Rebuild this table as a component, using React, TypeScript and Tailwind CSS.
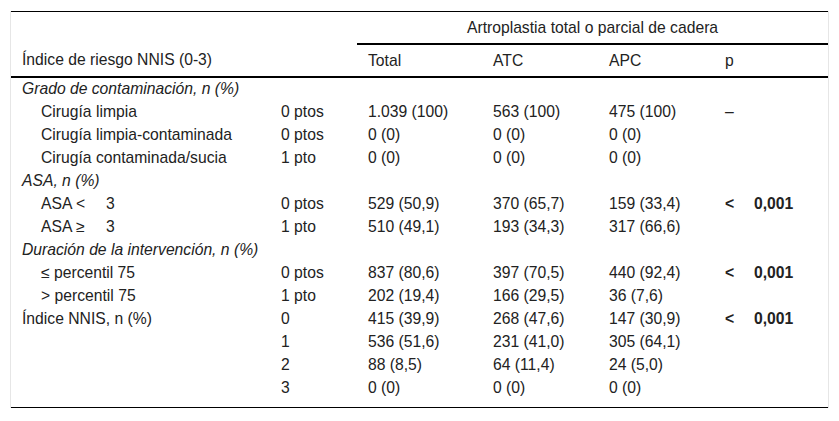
const rows: {
  a: string;
  kind: "sec" | "sub" | "top";
  b?: string;
  t?: string;
  atc?: string;
  apc?: string;
  p?: "dash" | "sig";
  asa?: string;
}[] = [
  { a: "Grado de contaminación, n (%)", kind: "sec" },
  { a: "Cirugía limpia", kind: "sub", b: "0 ptos", t: "1.039 (100)", atc: "563 (100)", apc: "475 (100)", p: "dash" },
  { a: "Cirugía limpia-contaminada", kind: "sub", b: "0 ptos", t: "0 (0)", atc: "0 (0)", apc: "0 (0)" },
  { a: "Cirugía contaminada/sucia", kind: "sub", b: "1 pto", t: "0 (0)", atc: "0 (0)", apc: "0 (0)" },
  { a: "ASA, n (%)", kind: "sec" },
  { a: "ASA", asa: "<", kind: "sub", b: "0 ptos", t: "529 (50,9)", atc: "370 (65,7)", apc: "159 (33,4)", p: "sig" },
  { a: "ASA", asa: "≥", kind: "sub", b: "1 pto", t: "510 (49,1)", atc: "193 (34,3)", apc: "317 (66,6)" },
  { a: "Duración de la intervención, n (%)", kind: "sec" },
  { a: "≤ percentil 75", kind: "sub", b: "0 ptos", t: "837 (80,6)", atc: "397 (70,5)", apc: "440 (92,4)", p: "sig" },
  { a: "> percentil 75", kind: "sub", b: "1 pto", t: "202 (19,4)", atc: "166 (29,5)", apc: "36 (7,6)" },
  { a: "Índice NNIS, n (%)", kind: "top", b: "0", t: "415 (39,9)", atc: "268 (47,6)", apc: "147 (30,9)", p: "sig" },
  { a: "", kind: "top", b: "1", t: "536 (51,6)", atc: "231 (41,0)", apc: "305 (64,1)" },
  { a: "", kind: "top", b: "2", t: "88 (8,5)", atc: "64 (11,4)", apc: "24 (5,0)" },
  { a: "", kind: "top", b: "3", t: "0 (0)", atc: "0 (0)", apc: "0 (0)" },
];

function PCell({ p }: { p?: "dash" | "sig" }) {
  if (p === "dash") return <span>–</span>;
  if (p === "sig")
    return (
      <span className="font-bold">
        <span className="inline-block w-[29px]">&lt;</span>0,001
      </span>
    );
  return null;
}

export default function App() {
  return (
    <div
      className="min-h-[421px] bg-white pt-[11px] text-[15.7px] leading-[20px] text-[#222]"
      style={{ fontFamily: '"Liberation Sans", Arial, sans-serif' }}
    >
      <div className="ml-[10px] w-[819px] border-x border-[#e6e6e6]">
        <div className="border-t border-b border-black pb-[8px]">
          <table className="w-full table-fixed border-collapse">
            <colgroup>
              <col className="w-[259px]" />
              <col className="w-[87px]" />
              <col className="w-[125px]" />
              <col className="w-[116px]" />
              <col className="w-[116px]" />
              <col className="w-[114px]" />
            </colgroup>
            <thead>
              <tr className="h-[32px]">
                <th />
                <th />
                <th colSpan={4} className="border-b-2 border-black text-center font-normal">
                  Artroplastia total o parcial de cadera
                </th>
              </tr>
              <tr className="h-[33px] border-b-2 border-black">
                <th className="pl-[11px] text-left font-normal">Índice de riesgo NNIS (0-3)</th>
                <th />
                <th className="pl-[11px] text-left font-normal">Total</th>
                <th className="pl-[11px] text-left font-normal">ATC</th>
                <th className="pl-[11px] text-left font-normal">APC</th>
                <th className="pl-[11px] text-left font-normal">p</th>
              </tr>
            </thead>
            <tbody>
              {rows.map((r, i) => (
                <tr key={i} className="h-[23px]">
                  <td
                    className={
                      r.kind === "sub"
                        ? "whitespace-nowrap pl-[30px]"
                        : r.kind === "sec"
                          ? "whitespace-nowrap pl-[11px] italic"
                          : "whitespace-nowrap pl-[11px]"
                    }
                    colSpan={r.kind === "sec" ? 2 : 1}
                  >
                    {r.asa ? (
                      <>
                        {r.a} <span className="inline-block w-[30px]">{r.asa}</span>3
                      </>
                    ) : (
                      r.a
                    )}
                  </td>
                  {r.kind !== "sec" && (
                    <>
                      <td className="pl-[11px]">{r.b}</td>
                      <td className="pl-[11px]">{r.t}</td>
                      <td className="pl-[11px]">{r.atc}</td>
                      <td className="pl-[11px]">{r.apc}</td>
                      <td className="pl-[11px]">
                        <PCell p={r.p} />
                      </td>
                    </>
                  )}
                  {r.kind === "sec" && <td colSpan={4} />}
                </tr>
              ))}
            </tbody>
          </table>
        </div>
      </div>
    </div>
  );
}
